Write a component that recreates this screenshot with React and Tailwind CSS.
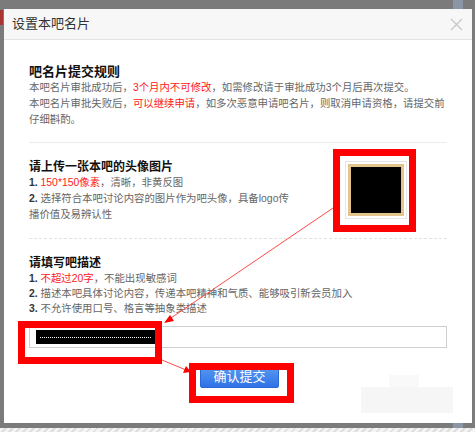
import React from 'react';

const font = { fontFamily: '"Liberation Sans", "Noto Sans CJK SC", sans-serif' };

const Red = ({ children }) => <span className="text-[#ff2020]">{children}</span>;
const Num = ({ n }) => <span className="font-bold text-[#333]">{n}. </span>;

const App = () => {
  return (
    <div className="relative w-[475px] h-[432px] overflow-hidden bg-[#7b7b7b] pt-[9px] pl-[4px]" style={font}>
      {/* bits of the page behind the overlay */}
      <div className="absolute left-0 top-[10px] w-[3px] h-[15px] bg-[#a33]" />
      <div className="absolute left-[453px] top-0 w-[10px] h-[9px] bg-[#8a96a3]" />
      <div className="absolute left-0 bottom-0 w-full h-[4px] bg-[repeating-linear-gradient(135deg,#f4f4f4_0px,#f4f4f4_3px,#dedede_3px,#dedede_5px)]" />
      <div className="absolute left-[453px] bottom-[4px] w-[10px] h-[5px] bg-[#8a96a3]" />

      <div className="relative w-[468px] h-[414px] bg-white">
        {/* header */}
        <div className="flex items-center justify-between h-[31px] bg-[#f7f7f7] border-b border-[#e3e3e3] pl-[8px] pr-[8px]">
          <span className="text-[13px] text-[#333]">设置本吧名片</span>
          <svg width="13" height="13" viewBox="0 0 13 13" className="mr-[1px]">
            <path d="M1 1 L12 12 M12 1 L1 12" stroke="#c8c8c8" strokeWidth="1.4" />
          </svg>
        </div>

        <div className="px-[25px] text-[10.4px] leading-[16px] text-[#666]">
          {/* rules */}
          <div className="pt-[24px] pb-[14px] border-b border-[#ececec]">
            <div className="font-bold text-[13px] text-[#111]">吧名片提交规则</div>
            <div className="whitespace-nowrap">
              本吧名片审批成功后，<Red>3个月内不可修改</Red>，如需修改请于审批成功3个月后再次提交。
            </div>
            <div className="whitespace-nowrap">
              本吧名片审批失败后，<Red>可以继续申请</Red>，如多次恶意申请吧名片，则取消申请资格，请提交前
            </div>
            <div>仔细斟酌。</div>
          </div>

          {/* avatar */}
          <div className="flex items-start pt-[16px] pb-[15px] border-b border-dashed border-[#e2e2e2]">
            <div className="whitespace-nowrap">
              <div className="font-bold text-[12px] text-[#111]">请上传一张本吧的头像图片</div>
              <div>
                <Num n="1" />
                <Red>150*150像素</Red>，清晰，非黄反图
              </div>
              <div>
                <Num n="2" />
                选择符合本吧讨论内容的图片作为吧头像，具备logo传
              </div>
              <div>播价值及易辨认性</div>
            </div>
            <div className="ml-auto mr-[40px] mt-[2px] w-[62px] h-[58px] border border-[#e6e6e6] p-[2px]">
              <div className="w-full h-full bg-black border-[3px] border-[#e2c48c]" />
            </div>
          </div>

          {/* description */}
          <div className="pt-[16px]">
            <div className="font-bold text-[12px] text-[#111]">请填写吧描述</div>
            <div className="leading-[15px]">
              <Num n="1" />
              <Red>不超过20字</Red>，不能出现敏感词
            </div>
            <div className="leading-[15px]">
              <Num n="2" />
              描述本吧具体讨论内容，传递本吧精神和气质、能够吸引新会员加入
            </div>
            <div className="leading-[15px]">
              <Num n="3" />
              不允许使用口号、格言等抽象类描述
            </div>
            <div className="mt-[10px] h-[22px] border border-[#cfcfcf] flex items-center pl-[6px]">
              <div className="w-[119px] h-[14px] bg-black flex items-center px-[4px]">
                <div className="w-full border-t border-dotted border-white" />
              </div>
            </div>
            <div className="mt-[17px] ml-[171px] w-[79px] h-[23px] rounded-[2px] bg-gradient-to-b from-[#5a9af2] to-[#2f72e6] border border-[#2a6ad8] flex items-center justify-center text-white text-[13px]">
              确认提交
            </div>
          </div>
        </div>

        {/* faint watermark */}
        <div className="absolute left-[357px] top-[378px] w-[92px] h-[26px] bg-[#f6f6f6]" />
        <div className="absolute left-[385px] top-[366px] w-[30px] h-[12px] bg-[#f9f9f9]" />

        {/* annotation boxes */}
        <div className="absolute left-[329px] top-[140px] w-[83px] h-[83px] border-[7px] border-[#ff0000]" />
        <div className="absolute left-[14px] top-[312px] w-[144px] h-[43px] border-[7px] border-[#ff0000]" />
        <div className="absolute left-[185px] top-[354px] w-[105px] h-[40px] border-[7px] border-[#ff0000]" />

        {/* arrows */}
        <svg className="absolute left-0 top-0 pointer-events-none" width="468" height="414" viewBox="0 0 468 414">
          <line x1="329" y1="199" x2="164" y2="311" stroke="#ff4a4a" strokeWidth="1" />
          <polygon points="160,314 166,306 170,312" fill="#ff0000" />
          <line x1="158" y1="351" x2="182" y2="361" stroke="#ff4a4a" strokeWidth="1" />
          <polygon points="187,363 179,364 182,357" fill="#ff0000" />
        </svg>
      </div>
    </div>
  );
};

export default App;
